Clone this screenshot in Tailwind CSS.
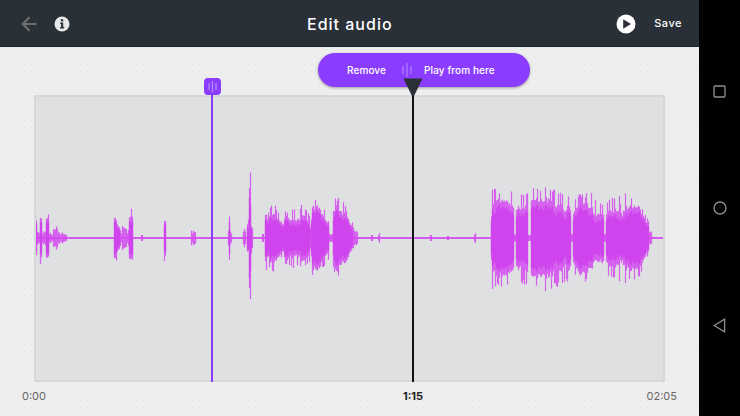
<!DOCTYPE html>
<html lang="en">
<head>
  <meta charset="UTF-8" />
  <meta name="viewport" content="width=device-width, initial-scale=1.0"/>
  <title>Edit audio</title>
  <script src="https://cdn.jsdelivr.net/npm/@tailwindcss/browser@4"></script>
</head>
<body class="bg-black h-[416px] w-[740px] overflow-hidden flex font-['Inter',sans-serif]">
  <div class="w-[699px] h-[416px] flex flex-col">
    <!-- Header -->
    <header class="h-[47px] shrink-0 bg-[#2a3038] border-b border-[#1d2127] flex items-center pt-[1px] pl-[21px] pr-[17px]">
      <svg width="16" height="16" viewBox="0 0 16 16" fill="none" stroke="#6e6e6e" stroke-width="2.2">
        <path d="M15.5 8H2M8.5 1.2 1.8 8l6.7 6.8"/>
      </svg>
      <svg class="ml-[17px]" width="16" height="16" viewBox="0 0 16 16">
        <circle cx="8" cy="8" r="7.5" fill="#e8e8e8"/>
        <rect x="6.9" y="3.2" width="2.3" height="2.2" fill="#2a3038"/>
        <path d="M6.2 6.5h3v4.6h1v1.4H6.1v-1.4h1V7.9h-.9z" fill="#2a3038"/>
      </svg>
      <h1 class="ml-[237px] text-white text-[16px] font-medium tracking-[1px] leading-none w-[300px] shrink-0">Edit audio</h1>
      <svg class="ml-[9px]" width="20" height="20" viewBox="0 0 20 20">
        <circle cx="10" cy="10" r="9.5" fill="#fff"/>
        <path d="M7.2 5.2 15 10l-7.8 4.8z" fill="#2a3038"/>
      </svg>
      <button class="ml-auto text-white text-[11px] font-medium tracking-[0.5px]">Save</button>
    </header>

    <!-- Editor -->
    <main class="relative flex-1 bg-[#eeeeee] bg-[radial-gradient(#e3e3e3_0.7px,transparent_0.8px)] bg-[size:7px_7px] pt-[48px] pl-[34px] pr-[34px]">
      <div class="h-[287px] border-2 border-[#d6d7d8] bg-[#dfe0e2]">
        <svg id="wave" class="block w-full h-full" viewBox="36 97 627 283"></svg>
      </div>

      <div class="relative h-[28px] text-[11px] text-[#666] -ml-[12px] -mr-[12px] flex justify-between items-center">
        <span>0:00</span>
        <span class="absolute left-[391px] -translate-x-1/2 font-bold text-[#222]">1:15</span>
        <span>02:05</span>
      </div>

      <!-- Action pill -->
      <div class="absolute left-[318px] top-[6px] w-[212px] h-[34px] rounded-full bg-[#8b3dff] shadow-[0_1px_3px_rgba(0,0,0,0.35)] flex items-center text-white text-[10px] font-medium tracking-[0.1px]">
        <span class="ml-[29px] w-[55px]">Remove</span>
        <svg width="10" height="14" viewBox="0 0 10 14" stroke="#b68cff" stroke-width="1">
          <path d="M1 3v8M5 0v14M9 3v8"/>
        </svg>
        <span class="ml-[12px]">Play from here</span>
      </div>

      <!-- Start marker -->
      <div class="absolute left-[211px] top-[48px] w-[2px] h-[287px] bg-[#8b3dff]"></div>
      <div class="absolute left-[204px] top-[31px] w-[17px] h-[17px] rounded-[4px] bg-[#8b3dff] flex items-center justify-center">
        <svg width="9" height="11" viewBox="0 0 9 11" stroke="#b68cff" stroke-width="1.2">
          <path d="M1 2v7M4.5 0v11M8 2v7"/>
        </svg>
      </div>

      <!-- Playhead -->
      <div class="absolute left-[412px] top-[48px] w-[2px] h-[287px] bg-[#111]"></div>
      <svg class="absolute left-[403px] top-[31px]" width="20" height="20" viewBox="0 0 20 20">
        <path d="M0.5 0.5h19L11 18H9z" fill="#2a3038"/>
      </svg>
    </main>
  </div>

  <!-- Android nav -->
  <nav class="w-[41px] h-[416px] bg-black flex flex-col items-center pt-[85px]">
    <svg width="13" height="13" viewBox="0 0 13 13" fill="none" stroke="#8f8f8f" stroke-width="1.3"><rect x="1" y="1" width="11" height="11" rx="1"/></svg>
    <svg class="mt-[103px]" width="14" height="14" viewBox="0 0 14 14" fill="none" stroke="#8f8f8f" stroke-width="1.3"><circle cx="7" cy="7" r="6"/></svg>
    <svg class="mt-[103px]" width="13" height="15" viewBox="0 0 13 15" fill="none" stroke="#8f8f8f" stroke-width="1.3"><path d="M1.2 7.5 11.6 1.2v12.6z"/></svg>
  </nav>

  <script>
    // [from x, to x, amp at start, amp at end]
    const segments = [
      [35, 36, 25, 25], [37, 39, 7, 6], [40, 41, 28, 28], [42, 45, 8, 7], [46, 48, 26, 24], [49, 52, 6, 5],
      [53, 57, 13, 12], [58, 62, 6, 7], [63, 66, 4, 3],
      [114, 116, 27, 24], [117, 119, 20, 16], [120, 121, 8, 6], [122, 126, 13, 12], [127, 128, 6, 8], [129, 132, 31, 29],
      [141, 142, 3, 3], [164, 165, 25, 25], [191, 195, 9, 6],
      [228, 231, 8, 7], [229, 229, 35, 35], [243, 245, 13, 10], [247, 248, 20, 20], [249, 250, 68, 68], [251, 252, 16, 12], [262, 263, 4, 4],
      [265, 266, 34, 33], [267, 273, 26, 36], [274, 283, 34, 18], [284, 290, 26, 30], [291, 300, 30, 30], [301, 309, 34, 24],
      [310, 312, 12, 40], [313, 319, 42, 38], [320, 328, 34, 24], [329, 332, 5, 4],
      [333, 335, 30, 40], [336, 344, 42, 36], [345, 352, 32, 16], [353, 357, 12, 6], [371, 372, 3, 3], [378, 379, 5, 5],
      [430, 431, 3, 3], [447, 448, 2, 2], [474, 475, 6, 6],
      [491, 492, 34, 52], [493, 513, 50, 48], [514, 515, 4, 3], [516, 527, 44, 48], [528, 530, 3, 3],
      [531, 548, 50, 54], [549, 570, 52, 44], [571, 572, 4, 4], [573, 575, 40, 40], [576, 592, 44, 46], [593, 596, 40, 38],
      [597, 603, 40, 36], [604, 605, 4, 4], [606, 619, 38, 44], [620, 622, 34, 34], [623, 640, 46, 40], [641, 648, 34, 18],
      [649, 651, 8, 7]
    ];

    let seed = 7;
    function rand() {
      seed = (seed * 16807) % 2147483647;
      return seed / 2147483647;
    }

    let core = "";
    let peaks = "M36 238H663";
    let drift = 0.5;
    segments.forEach(([from, to, a, b]) => {
      for (let x = from; x <= to; x++) {
        const t = to === from ? 0 : (x - from) / (to - from);
        const amp = a + (b - a) * t;
        if (amp <= 13) {
          // Quiet parts: short uneven ticks rather than a flat block
          const h = amp > 4 ? amp * (0.5 + rand() * 0.5) : amp;
          peaks += `M${x + 0.5} ${238 - h}V${238 + h}`;
          continue;
        }
        // Jagged outline: most columns fall well short, a few reach the full height
        drift = 0.6 * drift + 0.4 * rand();
        const up = amp * (rand() > 0.72 ? 0.9 + rand() * 0.1 : 0.5 + drift * 0.4);
        const down = amp * (rand() > 0.72 ? 0.9 + rand() * 0.1 : 0.5 + drift * 0.4);
        const inner = 0.32 + drift * 0.45;
        peaks += `M${x + 0.5} ${238 - up}V${238 + down}`;
        core += `M${x + 0.5} ${238 - amp * inner}V${238 + amp * inner}`;
      }
    });

    document.getElementById("wave").innerHTML =
      `<path d="${peaks}" stroke="#d44bf0" stroke-opacity="0.85" stroke-width="1.2" fill="none"/>` +
      `<path d="${core}" stroke="#d044ee" stroke-width="1.3" fill="none"/>` +
      `<path d="M36 238H663" stroke="#d246ef" stroke-width="1.6" fill="none"/>`;
  </script>
</body>
</html>
